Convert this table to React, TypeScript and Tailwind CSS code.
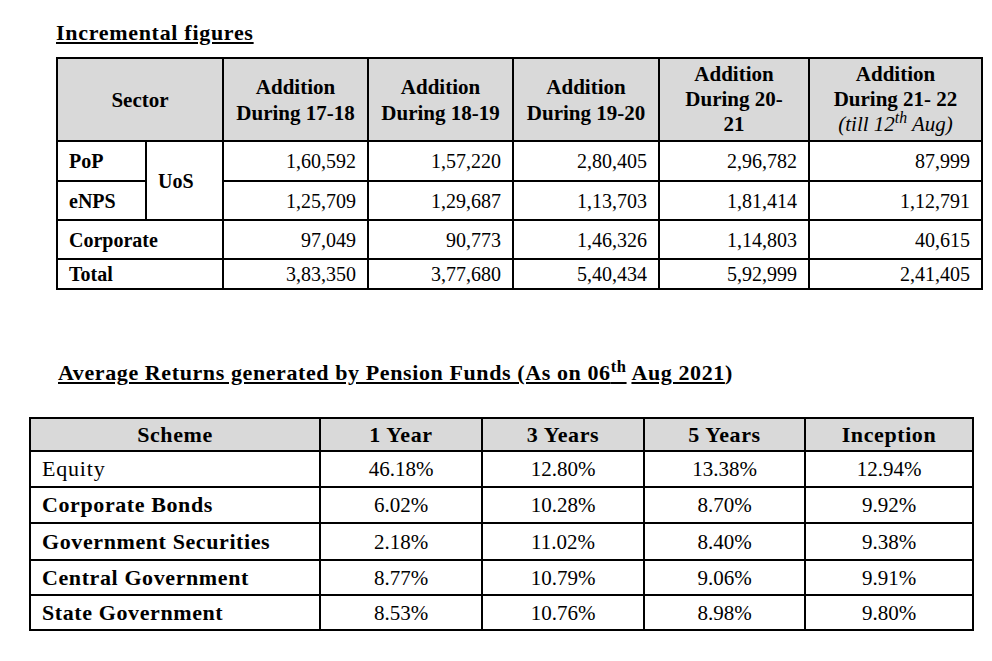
import React from "react";

const cell = "bg-white flex items-center";
const hd = "bg-[#d9d9d9] flex items-center justify-center text-center font-bold";

const rows1 = [
  ["1,60,592", "1,57,220", "2,80,405", "2,96,782", "87,999"],
  ["1,25,709", "1,29,687", "1,13,703", "1,81,414", "1,12,791"],
  ["97,049", "90,773", "1,46,326", "1,14,803", "40,615"],
  ["3,83,350", "3,77,680", "5,40,434", "5,92,999", "2,41,405"],
];

const rows2: [string, boolean, string[]][] = [
  ["Equity", false, ["46.18%", "12.80%", "13.38%", "12.94%"]],
  ["Corporate Bonds", true, ["6.02%", "10.28%", "8.70%", "9.92%"]],
  ["Government Securities", true, ["2.18%", "11.02%", "8.40%", "9.38%"]],
  ["Central Government", true, ["8.77%", "10.79%", "9.06%", "9.91%"]],
  ["State Government", true, ["8.53%", "10.76%", "8.98%", "9.80%"]],
];

function Num({ v }: { v: string }) {
  return <div className={`${cell} text-[20px] justify-end pr-[11px]`}>{v}</div>;
}

const lab = `${cell} text-[20px] pl-[11px] font-bold`;

export default function App() {
  return (
    <div className="bg-white w-[992px] h-[661px] pt-[21px] text-black font-['Liberation_Serif',serif]">
      <div className="ml-[56px] h-[24px] leading-[24px] text-[22px] tracking-[0.7px] font-bold underline underline-offset-[2px]">
        Incremental figures
      </div>

      <div className="ml-[56px] mt-[12px] w-[927px] grid grid-cols-[87px_75px_143px_143px_144px_148px_171px] grid-rows-[81px_38px_37px_37px_28px] gap-[2px] p-[2px] bg-black text-[21px] leading-[24px]">
        <div className={`${hd} col-span-2`}>Sector</div>
        <div className={`${hd} leading-[26px]`}>Addition<br />During 17-18</div>
        <div className={`${hd} leading-[26px]`}>Addition<br />During 18-19</div>
        <div className={`${hd} leading-[26px]`}>Addition<br />During 19-20</div>
        <div className={`${hd} leading-[25px]`}>Addition<br />During 20-<br />21</div>
        <div className={`${hd} leading-[25px]`}>
          <div>
            Addition<br />During 21- 22<br />
            <span className="italic font-normal">(till 12<sup>th</sup> Aug)</span>
          </div>
        </div>

        <div className={lab}>PoP</div>
        <div className={`${lab} row-span-2`}>UoS</div>
        {rows1[0].map((v, i) => <Num key={i} v={v} />)}

        <div className={lab}>eNPS</div>
        {rows1[1].map((v, i) => <Num key={i} v={v} />)}

        <div className={`${lab} col-span-2`}>Corporate</div>
        {rows1[2].map((v, i) => <Num key={i} v={v} />)}

        <div className={`${lab} col-span-2`}>Total</div>
        {rows1[3].map((v, i) => <Num key={i} v={v} />)}
      </div>

      <div className="ml-[58px] mt-[71px] h-[24px] leading-[24px] text-[22px] tracking-[0.6px] font-bold">
        <span className="underline underline-offset-[2px]">
          Average Returns generated by Pension Funds (As on 06<sup>th</sup>
        </span>{" "}
        <span className="underline underline-offset-[2px]">Aug 2021</span>)
      </div>

      <div className="ml-[29px] mt-[32px] w-[945px] grid grid-cols-[288px_160px_160px_159px_166px] grid-rows-[31px_34px_34px_35px_33px_33px] gap-[2px] p-[2px] bg-black text-[22px] leading-[24px]">
        <div className={`${hd} tracking-[0.6px]`}>Scheme</div>
        <div className={`${hd} tracking-[0.6px]`}>1 Year</div>
        <div className={`${hd} tracking-[0.6px]`}>3 Years</div>
        <div className={`${hd} tracking-[0.6px]`}>5 Years</div>
        <div className={`${hd} tracking-[0.6px]`}>Inception</div>
        {rows2.map(([name, bold, vals]) => (
          <React.Fragment key={name}>
            <div className={`${cell} pl-[11px] ${bold ? "font-bold tracking-[0.6px]" : "tracking-[0.8px]"}`}>{name}</div>
            {vals.map((v, i) => (
              <div key={i} className={`${cell} text-[21px] justify-center`}>{v}</div>
            ))}
          </React.Fragment>
        ))}
      </div>
    </div>
  );
}
